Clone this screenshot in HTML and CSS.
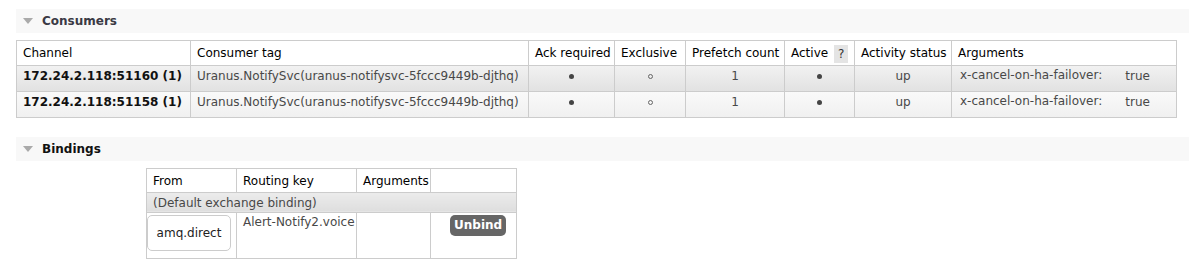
FILE: index.html
```html
<!DOCTYPE html>
<html lang="en">
<head>
    <meta charset="UTF-8">
    <title>Queue - Consumers and Bindings</title>
    <link rel="stylesheet" href="styles.css">
</head>
<body>
    <div class="page">
        <section class="section">
            <h2 class="section-head"><span class="toggle"></span>Consumers</h2>
            <table class="list consumers">
                <thead>
                    <tr>
                        <th class="c-channel">Channel</th>
                        <th class="c-tag">Consumer tag</th>
                        <th class="c-ack">Ack required</th>
                        <th class="c-excl">Exclusive</th>
                        <th class="c-prefetch">Prefetch count</th>
                        <th class="c-active">Active <span class="help">?</span></th>
                        <th class="c-status">Activity status</th>
                        <th class="c-args">Arguments</th>
                    </tr>
                </thead>
                <tbody>
                    <tr class="alt1">
                        <td class="channel">172.24.2.118:51160 (1)</td>
                        <td>Uranus.NotifySvc(uranus-notifysvc-5fccc9449b-djthq)</td>
                        <td class="c"><span class="dot"></span></td>
                        <td class="c"><span class="ring"></span></td>
                        <td class="c">1</td>
                        <td class="c"><span class="dot"></span></td>
                        <td class="c">up</td>
                        <td class="args">
                            <table class="facts">
                                <tr><th>x-cancel-on-ha-failover:</th><td>true</td></tr>
                            </table>
                        </td>
                    </tr>
                    <tr class="alt2">
                        <td class="channel">172.24.2.118:51158 (1)</td>
                        <td>Uranus.NotifySvc(uranus-notifysvc-5fccc9449b-djthq)</td>
                        <td class="c"><span class="dot"></span></td>
                        <td class="c"><span class="ring"></span></td>
                        <td class="c">1</td>
                        <td class="c"><span class="dot"></span></td>
                        <td class="c">up</td>
                        <td class="args">
                            <table class="facts">
                                <tr><th>x-cancel-on-ha-failover:</th><td>true</td></tr>
                            </table>
                        </td>
                    </tr>
                </tbody>
            </table>
        </section>

        <section class="section bindings-section">
            <h2 class="section-head dark"><span class="toggle"></span>Bindings</h2>
            <div class="bindings-wrap">
                <table class="list bindings">
                    <thead>
                        <tr>
                            <th class="b-from">From</th>
                            <th class="b-key">Routing key</th>
                            <th class="b-args">Arguments</th>
                            <th class="b-act"></th>
                        </tr>
                    </thead>
                    <tbody>
                        <tr class="default-row">
                            <td colspan="4">(Default exchange binding)</td>
                        </tr>
                        <tr class="binding-row">
                            <td class="from"><span class="exchange">amq.direct</span></td>
                            <td>Alert-Notify2.voice</td>
                            <td></td>
                            <td><button class="unbind">Unbind</button></td>
                        </tr>
                    </tbody>
                </table>
            </div>
        </section>
    </div>
</body>
</html>
```

FILE: styles.css
```css
/* General */
body {
    margin: 0;
    background: #fff;
    font-family: "DejaVu Sans", Verdana, sans-serif;
    font-size: 12px;
    line-height: 14px;
    color: #484848;
}

.page {
    padding: 9px 0 0 16px;
}

/* Section headers */
.section-head {
    margin: 0;
    height: 24px;
    display: flex;
    align-items: center;
    background: #f8f8f8;
    font-size: 12px;
    font-weight: bold;
    color: #3a3a44;
}

.section-head.dark {
    color: #111;
}

.toggle {
    width: 0;
    height: 0;
    margin: 0 9px 0 7px;
    border-left: 5px solid transparent;
    border-right: 5px solid transparent;
    border-top: 6px solid #aaa;
}

.bindings-section {
    margin-top: 19px;
}

/* Tables */
table.list {
    border-collapse: collapse;
    margin-top: 7px;
    table-layout: fixed;
}

table.list > thead > tr > th,
table.list > tbody > tr > td {
    border: 1px solid #ccc;
    white-space: nowrap;
    overflow: hidden;
}

table.list > thead > tr > th {
    padding: 5px 6px 4px;
    font-weight: normal;
    color: #000;
    text-align: left;
    background: #fff;
}

table.list > tbody > tr > td {
    padding: 3px 6px 8px;
    vertical-align: top;
}

table.consumers {
    width: 1160px;
}

.c-channel { width: 161px; }
.c-tag { width: 325px; }
.c-ack { width: 73px; }
.c-excl { width: 58px; }
.c-prefetch { width: 86px; }
.c-active { width: 57px; }
.c-status { width: 84px; }
.c-args { width: 212px; }

.help {
    display: inline-block;
    vertical-align: middle;
    background: #e4e4e4;
    color: #333;
    padding: 2px 4px;
    margin: -2px 0 -2px 2px;
    line-height: 14px;
}

tr.alt1 {
    background: linear-gradient(#f2f2f2, #e2e2e2);
}

tr.alt2 {
    background: linear-gradient(#fafafa, #f0f0f0);
}

td.channel {
    font-weight: bold;
    color: #111;
}

td.c {
    text-align: center;
}

.dot,
.ring {
    display: inline-block;
    vertical-align: middle;
    border-radius: 50%;
}

.dot {
    width: 5px;
    height: 5px;
    background: #444;
}

.ring {
    width: 3px;
    height: 3px;
    border: 1px solid #666;
}

table.list > tbody > tr > td.args {
    padding: 2px 6px 0;
}

table.facts {
    border-collapse: collapse;
}

table.facts th {
    font-weight: normal;
    text-align: left;
    padding: 0 2px;
    color: #484848;
}

table.facts td {
    padding: 1px 0 0 21px;
}

/* Bindings */
.bindings-wrap {
    padding-left: 130px;
}

table.bindings {
    width: 370px;
}

.b-from { width: 77px; }
.b-key { width: 107px; }
.b-args { width: 61px; }
.b-act { width: 73px; }

table.list > tbody > tr.default-row > td {
    padding: 3px 6px 2px;
    background: linear-gradient(#ececec, #dedede);
}

table.list > tbody > tr.binding-row > td {
    padding: 2px 6px 0;
}

table.list > tbody > tr.binding-row > td.from {
    padding: 2px 4px 7px 0;
}

.exchange {
    display: flex;
    align-items: center;
    justify-content: center;
    width: 82px;
    height: 34px;
    border: 1px solid #ccc;
    border-radius: 5px;
    background: #fff;
    color: #222;
}

button.unbind {
    margin: 0 0 0 13px;
    padding: 0 4px;
    height: 21px;
    border: none;
    border-radius: 5px;
    background: #666;
    color: #fff;
    font-family: "DejaVu Sans", Verdana, sans-serif;
    font-size: 12px;
    font-weight: bold;
}
```
